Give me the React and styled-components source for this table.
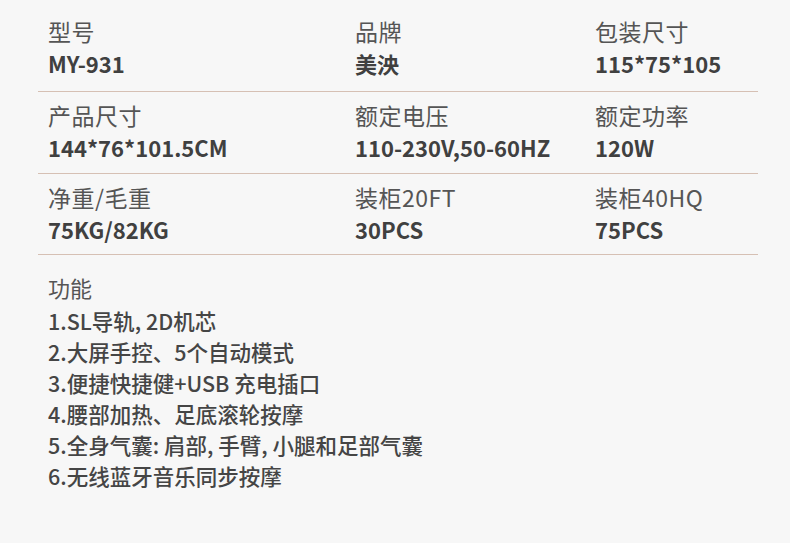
import React from 'react'
import styled, { createGlobalStyle } from 'styled-components'

const GlobalStyle = createGlobalStyle`
   html, body {
      margin: 0;
      padding: 0;
      background: #f7f7f7;
   }
   body {
      font-family: "Noto Sans CJK SC", "Noto Sans", sans-serif;
      color: #444;
   }
`

const Page = styled.div`
   width: 790px;
   height: 543px;
   background: #f7f7f7;
   padding: 0 32px 0 38px;
   box-sizing: border-box;
`

const SpecRow = styled.div`
   display: grid;
   grid-template-columns: 307px 240px 1fr;
   padding: ${props => props.top}px 0 0 10px;
   height: ${props => props.h}px;
   box-sizing: border-box;
   border-bottom: 1px solid #d6c0b4;
`

const Cell = styled.div`
   display: flex;
   flex-direction: column;
`

const Label = styled.div`
   font-size: 23px;
   letter-spacing: 0.5px;
   line-height: 32px;
   color: #555;
   font-weight: 400;
`

const Value = styled.div`
   font-size: 22px;
   line-height: 32px;
   font-weight: 700;
   color: #404040;
`

const Features = styled.div`
   padding: 15px 0 0 10px;
`

const FeatureTitle = styled.div`
   font-size: 22px;
   line-height: 35px;
   color: #555;
`

const FeatureLine = styled.div`
   font-size: 21.5px;
   line-height: 31px;
   font-weight: 500;
   color: #454545;
`

const specs = [
   { h: 92, top: 15, cells: [['型号', 'MY-931'], ['品牌', '美泱'], ['包装尺寸', '115*75*105']] },
   { h: 82, top: 7, cells: [['产品尺寸', '144*76*101.5CM'], ['额定电压', '110-230V,50-60HZ'], ['额定功率', '120W']] },
   { h: 81, top: 7, cells: [['净重/毛重', '75KG/82KG'], ['装柜20FT', '30PCS'], ['装柜40HQ', '75PCS']] },
]

const features = [
   '1.SL导轨, 2D机芯',
   '2.大屏手控、5个自动模式',
   '3.便捷快捷健+USB 充电插口',
   '4.腰部加热、足底滚轮按摩',
   '5.全身气囊: 肩部, 手臂, 小腿和足部气囊',
   '6.无线蓝牙音乐同步按摩',
]

const App = () => {
   return (
      <Page>
         <GlobalStyle />
         {specs.map((row, i) => (
            <SpecRow key={i} h={row.h} top={row.top}>
               {row.cells.map(([label, value]) => (
                  <Cell key={label}>
                     <Label>{label}</Label>
                     <Value>{value}</Value>
                  </Cell>
               ))}
            </SpecRow>
         ))}
         <Features>
            <FeatureTitle>功能</FeatureTitle>
            {features.map(line => (
               <FeatureLine key={line}>{line}</FeatureLine>
            ))}
         </Features>
      </Page>
   )
}

export default App
